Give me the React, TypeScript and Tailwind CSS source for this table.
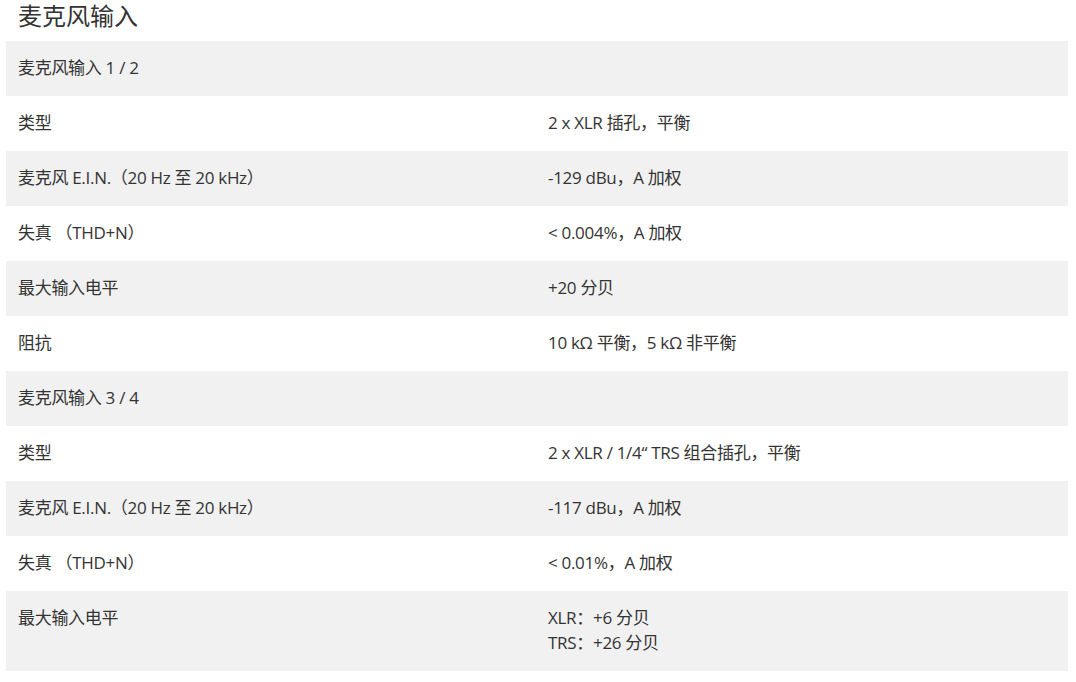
import React from "react";

const rows: { l: string; r?: string[]; gray: boolean }[] = [
  { l: "麦克风输入 1 / 2", gray: true },
  { l: "类型", r: ["2 x XLR 插孔，平衡"], gray: false },
  { l: "麦克风 E.I.N.（20 Hz 至 20 kHz）", r: ["-129 dBu，A 加权"], gray: true },
  { l: "失真 （THD+N）", r: ["< 0.004%，A 加权"], gray: false },
  { l: "最大输入电平", r: ["+20 分贝"], gray: true },
  { l: "阻抗", r: ["10 kΩ 平衡，5 kΩ 非平衡"], gray: false },
  { l: "麦克风输入 3 / 4", gray: true },
  { l: "类型", r: ["2 x XLR / 1/4“ TRS 组合插孔，平衡"], gray: false },
  { l: "麦克风 E.I.N.（20 Hz 至 20 kHz）", r: ["-117 dBu，A 加权"], gray: true },
  { l: "失真 （THD+N）", r: ["< 0.01%，A 加权"], gray: false },
  { l: "最大输入电平", r: ["XLR：+6 分贝", "TRS：+26 分贝"], gray: true },
];

export default function App() {
  return (
    <div
      className="w-[1076px] h-[682px] bg-white text-[#333333] pl-[6px] overflow-hidden"
      style={{ fontFamily: '"Open Sans", "Noto Sans CJK SC", sans-serif' }}
    >
      <h2 className="h-[41px] pl-[12px] text-[24px] leading-[32px] text-[#333333]">麦克风输入</h2>
      <div className="flex flex-col w-[1062px]">
        {rows.map((row, i) => (
          <div key={i} className={`flex text-[17px] leading-[25px] tracking-[-0.3px] ${row.gray ? "bg-[#f1f1f1]" : "bg-white"}`}>
            <div className="w-1/2 px-[12px] pt-[14px] pb-[16px]">{row.l}</div>
            <div className="w-1/2 px-[11px] pt-[14px] pb-[16px]">
              {row.r?.map((t, j) => (
                <div key={j}>{t}</div>
              ))}
            </div>
          </div>
        ))}
      </div>
    </div>
  );
}
